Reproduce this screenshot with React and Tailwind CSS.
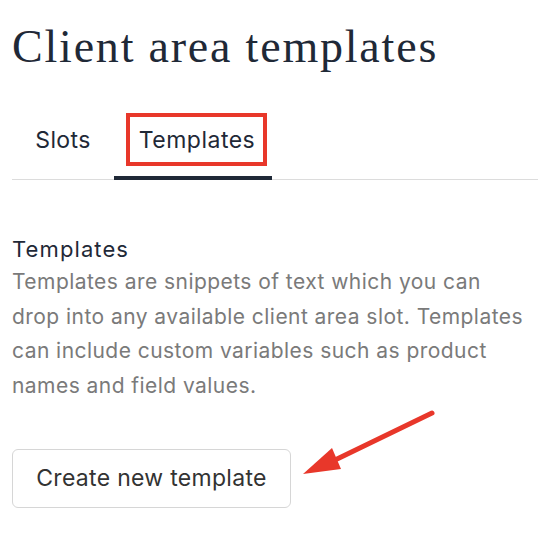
export default function App() {
  return (
    <div className="relative w-[538px] h-[560px] bg-white overflow-hidden" style={{ fontFamily: "Inter, 'Noto Sans', sans-serif" }}>
      <div className="pl-[12px]">
        <h1 className="pt-[20px] text-[46px] leading-[54px] text-[#1f2937] tracking-[1.8px]" style={{ fontFamily: "'Liberation Serif', 'DejaVu Serif', serif" }}>
          Client area templates
        </h1>
        <div className="mt-[36px] flex border-b border-[#dcdcdc] h-[70px]">
          <div className="w-[102px] flex items-start justify-center pt-[16px] text-[23px] leading-[28px] tracking-[0.4px] text-[#1f2937]">
            <span>Slots</span>
          </div>
          <div className="relative w-[158px] border-b-[4px] border-[#1f2937] -mb-[1px] flex items-start justify-center pt-[16px] pl-[8px]">
            <span className="text-[23px] leading-[28px] tracking-[0.5px] text-[#1f2937]">Templates</span>
            <div className="absolute left-[12px] top-[3px] w-[141px] h-[53px] border-[4px] border-[#e8372a]"></div>
          </div>
        </div>
        <div className="mt-[55px]">
          <div className="text-[22px] leading-[28px] tracking-[1.1px] text-[#1f2937]">Templates</div>
          <p className="mt-[2px] text-[21px] leading-[34.5px] tracking-[0.45px] text-[#7a7a7a] whitespace-nowrap">
            Templates are snippets of text which you can<br />
            drop into any available client area slot. Templates<br />
            can include custom variables such as product<br />
            names and field values.
          </p>
        </div>
        <button className="mt-[46px] w-[279px] h-[59px] rounded-[6px] border border-[#d6d6d6] bg-white text-[23px] tracking-[0.3px] text-[#333333] flex items-center justify-center">
          Create new template
        </button>
      </div>
      <svg className="absolute left-0 top-0" width="538" height="560" viewBox="0 0 538 560">
        <line x1="432" y1="413" x2="335" y2="460" stroke="#e8372a" strokeWidth="5" strokeLinecap="round" />
        <polygon points="303,474 332,448 341,469" fill="#e8372a" />
      </svg>
    </div>
  );
}
